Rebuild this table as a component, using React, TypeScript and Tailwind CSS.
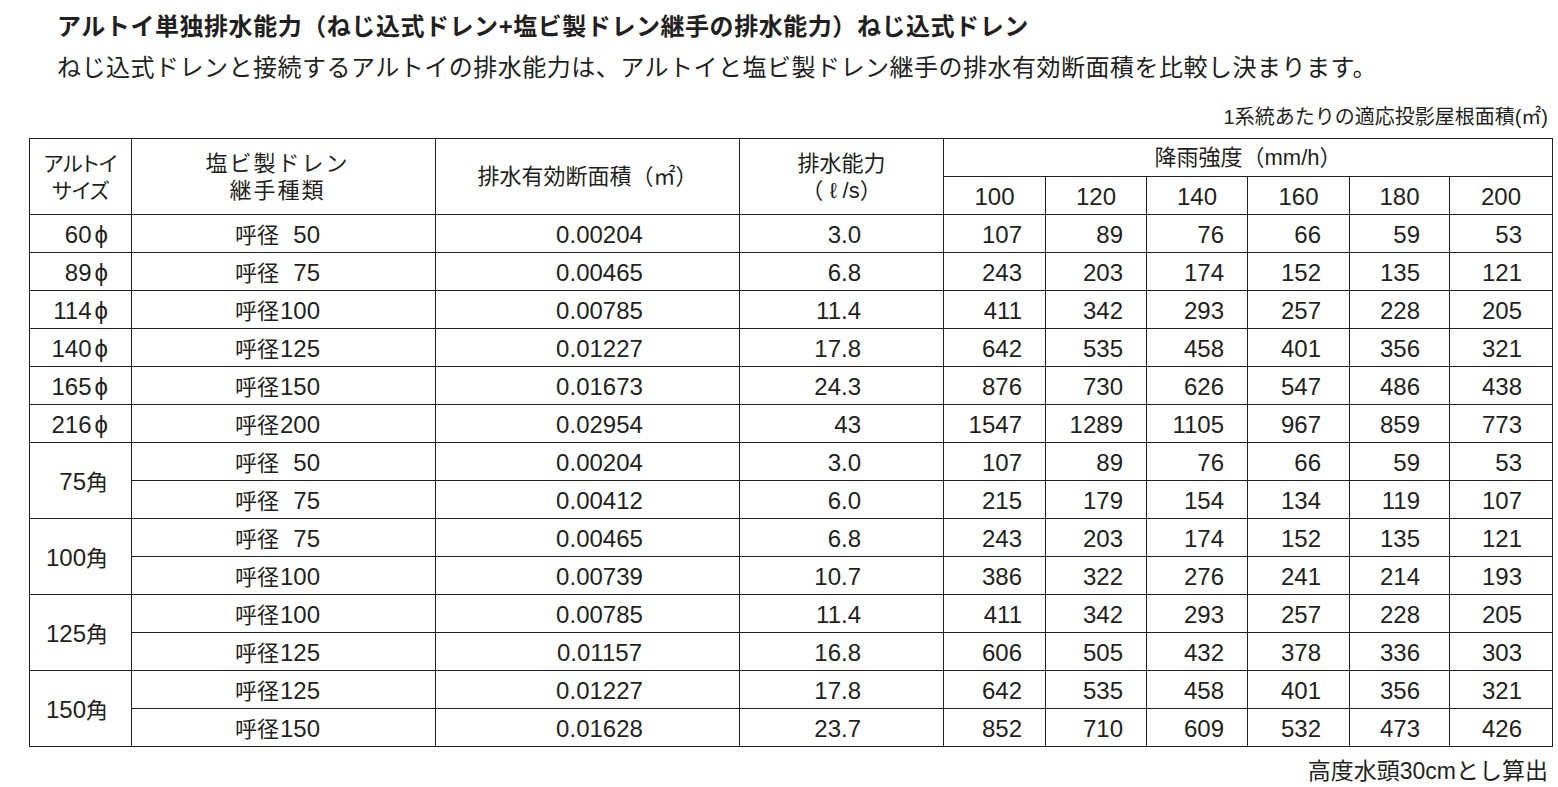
// Drain capacity table (ねじ込式ドレン) — recreated as a static page

type Row = {
  size?: { num: string; unit: string; span: number }
  nominal: string
  area: string
  flow: string
  roof: number[]
}

const rows: Row[] = [
  { size: { num: '60', unit: 'φ', span: 1 }, nominal: '50', area: '0.00204', flow: '3.0', roof: [107, 89, 76, 66, 59, 53] },
  { size: { num: '89', unit: 'φ', span: 1 }, nominal: '75', area: '0.00465', flow: '6.8', roof: [243, 203, 174, 152, 135, 121] },
  { size: { num: '114', unit: 'φ', span: 1 }, nominal: '100', area: '0.00785', flow: '11.4', roof: [411, 342, 293, 257, 228, 205] },
  { size: { num: '140', unit: 'φ', span: 1 }, nominal: '125', area: '0.01227', flow: '17.8', roof: [642, 535, 458, 401, 356, 321] },
  { size: { num: '165', unit: 'φ', span: 1 }, nominal: '150', area: '0.01673', flow: '24.3', roof: [876, 730, 626, 547, 486, 438] },
  { size: { num: '216', unit: 'φ', span: 1 }, nominal: '200', area: '0.02954', flow: '43', roof: [1547, 1289, 1105, 967, 859, 773] },
  { size: { num: '75', unit: '角', span: 2 }, nominal: '50', area: '0.00204', flow: '3.0', roof: [107, 89, 76, 66, 59, 53] },
  { nominal: '75', area: '0.00412', flow: '6.0', roof: [215, 179, 154, 134, 119, 107] },
  { size: { num: '100', unit: '角', span: 2 }, nominal: '75', area: '0.00465', flow: '6.8', roof: [243, 203, 174, 152, 135, 121] },
  { nominal: '100', area: '0.00739', flow: '10.7', roof: [386, 322, 276, 241, 214, 193] },
  { size: { num: '125', unit: '角', span: 2 }, nominal: '100', area: '0.00785', flow: '11.4', roof: [411, 342, 293, 257, 228, 205] },
  { nominal: '125', area: '0.01157', flow: '16.8', roof: [606, 505, 432, 378, 336, 303] },
  { size: { num: '150', unit: '角', span: 2 }, nominal: '125', area: '0.01227', flow: '17.8', roof: [642, 535, 458, 401, 356, 321] },
  { nominal: '150', area: '0.01628', flow: '23.7', roof: [852, 710, 609, 532, 473, 426] },
]

const rains = [100, 120, 140, 160, 180, 200]

// right padding of each rainfall column (numbers sit right-aligned)
const rainPad = ['pr-[23px]', 'pr-[23px]', 'pr-[23px]', 'pr-[28px]', 'pr-[29px]', 'pr-[30px]']

const cell = 'border border-[#231f20] p-0 align-middle'
const body = 'text-[24px] leading-[28px] pt-[3px]'

export default function App() {
  return (
    <div
      className="w-[1558px] h-[787px] bg-white text-[#231f20] flex flex-col overflow-hidden"
      style={{ fontFamily: "'Liberation Sans', 'Noto Sans CJK JP', sans-serif" }}
    >
      {/* heading */}
      <div className="pl-[57px] pt-[11px]">
        <h1 className="text-[24px] leading-[32px] font-bold tracking-[0.55px]">
          アルトイ単独排水能力（ねじ込式ドレン+塩ビ製ドレン継手の排水能力）ねじ込式ドレン
        </h1>
        <p className="mt-[9px] text-[24px] leading-[32px] tracking-[0.5px]">
          ねじ込式ドレンと接続するアルトイの排水能力は、アルトイと塩ビ製ドレン継手の排水有効断面積を比較し決まります。
        </p>
      </div>

      <div className="mt-[19px] pr-[10px] text-right text-[20px] leading-[28px]">
        1系統あたりの適応投影屋根面積(㎡)
      </div>

      {/* table */}
      <div className="mt-[7px] pl-[29px]">
        <table className="table-fixed border-collapse w-[1523px]">
          <colgroup>
            <col className="w-[102px]" />
            <col className="w-[304px]" />
            <col className="w-[304px]" />
            <col className="w-[204px]" />
            <col className="w-[102px]" />
            <col className="w-[101px]" />
            <col className="w-[101px]" />
            <col className="w-[102px]" />
            <col className="w-[100px]" />
            <col className="w-[103px]" />
          </colgroup>
          <thead>
            <tr className="h-[38px]">
              <th rowSpan={2} className={`${cell} font-normal text-[21px] leading-[27px] [font-feature-settings:'palt']`}>
                アルトイ
                <br />
                サイズ
              </th>
              <th rowSpan={2} className={`${cell} font-normal text-[22px] leading-[27px] tracking-[2px] pr-[12px]`}>
                塩ビ製ドレン
                <br />
                継手種類
              </th>
              <th rowSpan={2} className={`${cell} font-normal text-[22px] leading-[27px]`}>
                排水有効断面積（㎡）
              </th>
              <th rowSpan={2} className={`${cell} font-normal text-[22px] leading-[27px]`}>
                排水能力
                <br />
                （ ℓ /s）
              </th>
              <th colSpan={6} className={`${cell} font-normal text-[22px] leading-[27px]`}>
                降雨強度（mm/h）
              </th>
            </tr>
            <tr className="h-[38px]">
              {rains.map(r => (
                <th key={r} className={`${cell} font-normal text-[24px] leading-[27px] pt-[2px]`}>
                  {r}
                </th>
              ))}
            </tr>
          </thead>
          <tbody>
            {rows.map((row, i) => (
              <tr key={i} className="h-[38px]">
                {row.size && (
                  <td rowSpan={row.size.span} className={`${cell} text-right pr-[23px] ${body}`}>
                    {row.size.num}
                    {row.size.unit === 'φ' ? (
                      <span className="ml-[3px]">ϕ</span>
                    ) : (
                      <span className="text-[22px]">角</span>
                    )}
                  </td>
                )}
                <td className={`${cell} pr-[12px] pt-[3px]`}>
                  <div className="flex justify-center items-baseline">
                    <span className="text-[22px] leading-[28px]">呼径</span>
                    <span className="w-[41px] text-right text-[24px] leading-[28px]">{row.nominal}</span>
                  </div>
                </td>
                <td className={`${cell} text-center pl-[24px] ${body}`}>{row.area}</td>
                <td className={`${cell} text-right pr-[82px] ${body}`}>{row.flow}</td>
                {row.roof.map((v, j) => (
                  <td key={j} className={`${cell} text-right ${rainPad[j]} ${body}`}>
                    {v}
                  </td>
                ))}
              </tr>
            ))}
          </tbody>
        </table>
      </div>

      <div className="mt-[10px] pr-[10px] text-right text-[23px] leading-[28px]">
        高度水頭30cmとし算出
      </div>
    </div>
  )
}
